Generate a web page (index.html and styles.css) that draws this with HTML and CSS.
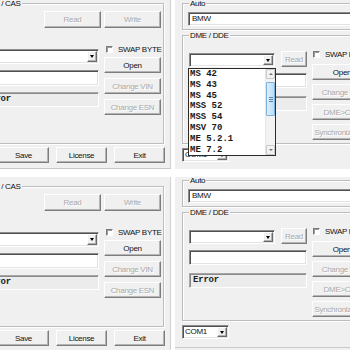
FILE: index.html
```html
<!DOCTYPE html>
<html lang="en">
<head>
<meta charset="utf-8">
<title>ECU tool</title>
<link rel="stylesheet" href="styles.css">
</head>
<body>
<main class="collage">
  <section class="win win-left">
    <div class="form cas cas-cropped">
      <div class="group cas-group">
        <div class="group-title">EWS / CAS</div>
        <div class="rw-row">
          <button class="btn btn-rw" disabled>Read</button>
          <button class="btn btn-rw" disabled>Write</button>
        </div>
        <div class="cas-body">
          <div class="cas-left">
            <div class="combo combo-cas"><span class="combo-text"></span><span class="drop-btn"><span class="tri"></span></span></div>
            <div class="field cas-field"></div>
            <div class="field readonly cas-error">Error</div>
          </div>
          <div class="cas-right">
            <div class="check"><span class="box"></span><span>SWAP BYTE</span></div>
            <button class="btn btn-open">Open</button>
            <button class="btn btn-side" disabled>Change VIN</button>
            <button class="btn btn-side" disabled>Change ESN</button>
          </div>
        </div>
      </div>
      <div class="cas-footer">
        <button class="btn btn-foot">Save</button>
        <button class="btn btn-foot">License</button>
        <button class="btn btn-foot">Exit</button>
      </div>
    </div>
  </section>

  <section class="win win-right">
    <div class="form dme">
      <div class="group auto-group">
        <div class="group-title">Auto</div>
        <div class="field text-field">BMW</div>
      </div>
      <div class="group dme-group">
        <div class="group-title">DME / DDE</div>
        <div class="dme-body">
          <div class="dme-left">
            <div class="dme-top">
              <div class="combo combo-dme"><span class="combo-text"></span><span class="drop-btn"><span class="tri"></span></span></div>
              <button class="btn btn-read" disabled>Read</button>
            </div>
            <div class="field dme-field"></div>
            <div class="field readonly dme-error">Error</div>
          </div>
          <div class="dme-right">
            <div class="check"><span class="box"></span><span>SWAP BYTE</span></div>
            <button class="btn btn-wide btn-open2">Open</button>
            <button class="btn btn-wide" disabled>Change VIN</button>
            <button class="btn btn-wide" disabled>DME&gt;CAS</button>
            <button class="btn btn-wide" disabled>Synchronize ISN</button>
          </div>
        </div>
      </div>
      <div class="combo combo-com"><span class="combo-text">COM1</span><span class="drop-btn"><span class="tri"></span></span></div>
    </div>
    <div class="list">
      <ul class="list-items">
        <li>MS 42</li>
        <li>MS 43</li>
        <li>MS 45</li>
        <li>MSS 52</li>
        <li>MSS 54</li>
        <li>MSV 70</li>
        <li>ME 5.2.1</li>
        <li>ME 7.2</li>
      </ul>
      <div class="scrollbar">
        <span class="sb-btn"><span class="sb-up"></span></span>
        <span class="sb-thumb"><span class="grip"></span></span>
        <span class="sb-btn sb-btn-down"><span class="sb-down"></span></span>
      </div>
    </div>
  </section>

  <section class="win win-left">
    <div class="form cas">
      <div class="group cas-group">
        <div class="group-title">EWS / CAS</div>
        <div class="rw-row">
          <button class="btn btn-rw" disabled>Read</button>
          <button class="btn btn-rw" disabled>Write</button>
        </div>
        <div class="cas-body">
          <div class="cas-left">
            <div class="combo combo-cas"><span class="combo-text"></span><span class="drop-btn"><span class="tri"></span></span></div>
            <div class="field cas-field"></div>
            <div class="field readonly cas-error">Error</div>
          </div>
          <div class="cas-right">
            <div class="check"><span class="box"></span><span>SWAP BYTE</span></div>
            <button class="btn btn-open">Open</button>
            <button class="btn btn-side" disabled>Change VIN</button>
            <button class="btn btn-side" disabled>Change ESN</button>
          </div>
        </div>
      </div>
      <div class="cas-footer">
        <button class="btn btn-foot">Save</button>
        <button class="btn btn-foot">License</button>
        <button class="btn btn-foot">Exit</button>
      </div>
    </div>
  </section>

  <section class="win win-right">
    <div class="form dme">
      <div class="group auto-group">
        <div class="group-title">Auto</div>
        <div class="field text-field">BMW</div>
      </div>
      <div class="group dme-group">
        <div class="group-title">DME / DDE</div>
        <div class="dme-body">
          <div class="dme-left">
            <div class="dme-top">
              <div class="combo combo-dme"><span class="combo-text"></span><span class="drop-btn"><span class="tri"></span></span></div>
              <button class="btn btn-read" disabled>Read</button>
            </div>
            <div class="field dme-field"></div>
            <div class="field readonly dme-error">Error</div>
          </div>
          <div class="dme-right">
            <div class="check"><span class="box"></span><span>SWAP BYTE</span></div>
            <button class="btn btn-wide btn-open2">Open</button>
            <button class="btn btn-wide" disabled>Change VIN</button>
            <button class="btn btn-wide" disabled>DME&gt;CAS</button>
            <button class="btn btn-wide" disabled>Synchronize ISN</button>
          </div>
        </div>
      </div>
      <div class="combo combo-com"><span class="combo-text">COM1</span><span class="drop-btn"><span class="tri"></span></span></div>
    </div>
  </section>
</main>
</body>
</html>
```

FILE: styles.css
```css
* { box-sizing: border-box; }
html, body { margin: 0; padding: 0; background: #fff; }
body {
  font-family: "Liberation Sans", Arial, sans-serif;
  font-size: 8px;
  letter-spacing: -0.3px;
  color: #111;
}

.collage {
  display: grid;
  grid-template-columns: 171px 175px;
  grid-template-rows: 169px 173px;
  column-gap: 4px;
  row-gap: 8px;
  width: 350px;
  height: 350px;
}

.win {
  position: relative;
  overflow: hidden;
  background: #f0f0f0;
  display: flex;
  align-items: flex-start;
}
.win-left { justify-content: flex-end; }
.win-right { justify-content: flex-start; }

.form { flex: none; display: flex; flex-direction: column; }

/* group boxes */
.group {
  display: flex;
  flex-direction: column;
  border: 1px solid #bdbdbd;
  box-shadow: inset 1px 1px 0 #fff, 1px 1px 0 #fff;
}
.group-title {
  align-self: flex-start;
  height: 9px;
  line-height: 9px;
  margin-top: -5px;
  padding: 0 1px;
  background: #f0f0f0;
  white-space: nowrap;
}

/* buttons */
.btn {
  appearance: none;
  -webkit-appearance: none;
  margin: 0;
  padding: 0;
  font: inherit;
  letter-spacing: inherit;
  color: #111;
  background: #f0f0f0;
  border: 1px solid;
  border-color: #fff #7d7d7d #7d7d7d #fff;
  box-shadow: inset -1px -1px 0 #b4b4b4;
  text-align: center;
  white-space: nowrap;
  overflow: hidden;
  flex: none;
}
.btn:disabled {
  color: #a9a9a9;
  text-shadow: 1px 1px 0 #fff;
}

/* inputs */
.field {
  background: #fff;
  border: 1px solid;
  border-color: #8c8c8c #fff #fff #8c8c8c;
  box-shadow: inset 1px 1px 0 #505050, inset -1px -1px 0 #e3e3e3;
  white-space: nowrap;
  overflow: hidden;
}
.field.readonly {
  background: #ececec;
  border-color: #a6a6a6 #fff #fff #a6a6a6;
  box-shadow: inset 1px 1px 0 #8a8a8a;
  font: bold 9px/13px "Liberation Mono", "Courier New", monospace;
  letter-spacing: -0.2px;
  padding-left: 3px;
  color: #222;
}

.combo {
  display: flex;
  align-items: stretch;
  background: #fff;
  border: 1px solid;
  border-color: #8c8c8c #fff #fff #8c8c8c;
  box-shadow: inset 1px 1px 0 #505050, inset -1px -1px 0 #e3e3e3;
  padding: 1px;
  flex: none;
}
.combo-text {
  flex: 1;
  padding-left: 1px;
  line-height: 10px;
  overflow: hidden;
  white-space: nowrap;
}
.drop-btn {
  width: 10px;
  flex: none;
  background: #f0f0f0;
  border: 1px solid;
  border-color: #fff #6a6a6a #6a6a6a #fff;
  box-shadow: inset -1px -1px 0 #b0b0b0;
  display: flex;
  align-items: center;
  justify-content: center;
}
.tri {
  width: 0;
  height: 0;
  border-left: 2.5px solid transparent;
  border-right: 2.5px solid transparent;
  border-top: 3px solid #000;
}

.check {
  display: flex;
  align-items: center;
  gap: 5px;
  height: 9px;
  white-space: nowrap;
}
.box {
  width: 7px;
  height: 7px;
  flex: none;
  background: #fff;
  border: 1px solid;
  border-color: #7a7a7a #fff #fff #7a7a7a;
  box-shadow: inset 1px 1px 0 #9a9a9a;
}

/* ---------- EWS / CAS window ---------- */
.cas {
  width: 203px;
  padding: 9px 6px 5px 6px;
  border-right: 1px solid #d2d2d2;
  border-bottom: 1px solid #c8c8c8;
}
.cas-cropped { margin-top: -6px; }
.cas-group { padding: 0 2px 28px 6px; }
.rw-row {
  display: flex;
  justify-content: flex-end;
  gap: 3px;
  margin-top: 3px;
}
.btn-rw { width: 57px; height: 17px; }
.cas-body {
  display: flex;
  gap: 5px;
  margin-top: 17px;
}
.cas-left {
  width: 118px;
  display: flex;
  flex-direction: column;
  gap: 6px;
  padding-top: 4px;
}
.combo-cas { height: 15px; }
.cas-field { height: 16px; }
.cas-error { height: 15px; }
.cas-right {
  width: 57px;
  display: flex;
  flex-direction: column;
}
.cas-right .check { margin-left: 2px; }
.btn-open { height: 16px; margin-top: 3px; }
.btn-side { height: 16px; margin-top: 5px; }
.cas-footer {
  display: flex;
  justify-content: flex-end;
  gap: 7px;
  margin-top: 3px;
  margin-right: -1px;
}
.btn-foot { width: 51px; height: 16px; }

/* ---------- Auto / DME window ---------- */
.dme {
  width: 240px;
  padding: 3px 0 8px 7px;
  border-bottom: 1px solid #c8c8c8;
}
.auto-group { padding: 0 0 3px 5px; }
.auto-group .group-title { margin-left: 1px; }
.text-field {
  margin-top: 4px;
  height: 14px;
  line-height: 12px;
  padding-left: 3px;
}
.dme-group {
  margin-top: 5px;
  padding: 0 0 3px 6px;
}
.dme-body {
  display: flex;
  gap: 5px;
  margin-top: 10px;
}
.dme-left {
  width: 118px;
  display: flex;
  flex-direction: column;
  padding-top: 1px;
}
.dme-top {
  display: flex;
  align-items: flex-end;
  gap: 6px;
}
.combo-dme { width: 86px; height: 14px; }
.btn-read { width: 26px; height: 16px; }
.dme-field { height: 15px; margin-top: 6px; }
.dme-error { height: 15px; margin-top: 8px; }
.dme-right {
  width: 60px;
  display: flex;
  flex-direction: column;
}
.dme-right .check { margin-left: 1px; }
.btn-wide { height: 16px; margin-top: 4px; }
.btn-open2 { margin-top: 5px; }
.combo-com {
  width: 47px;
  height: 14px;
  margin-top: 4px;
}

/* open drop-down list */
.list {
  position: absolute;
  left: 13px;
  top: 68px;
  width: 88px;
  height: 88px;
  background: #fff;
  border: 1px solid #2b2b2b;
  display: flex;
  overflow: hidden;
}
.list-items {
  flex: 1;
  list-style: none;
  margin: 0;
  padding: 0 0 0 1px;
  font: bold 9px/10.8px "Liberation Mono", "Courier New", monospace;
  letter-spacing: 0;
  color: #1a1a1a;
  white-space: nowrap;
}
.scrollbar {
  width: 10px;
  flex: none;
  display: flex;
  flex-direction: column;
  background: #f3f3f3;
  border-left: 1px solid #e6e6e6;
}
.sb-btn {
  height: 10px;
  flex: none;
  background: #f2f2f2;
  border: 1px solid #c9c9c9;
  border-radius: 1px;
  display: flex;
  align-items: center;
  justify-content: center;
}
.sb-btn-down { margin-top: auto; }
.sb-up {
  width: 0; height: 0;
  border-left: 2px solid transparent;
  border-right: 2px solid transparent;
  border-bottom: 2px solid #707070;
}
.sb-down {
  width: 0; height: 0;
  border-left: 2px solid transparent;
  border-right: 2px solid transparent;
  border-top: 2px solid #707070;
}
.sb-thumb {
  margin-top: 3px;
  height: 34px;
  flex: none;
  background: linear-gradient(90deg, #dcefff, #b9dcf6);
  border: 1px solid #7fb2da;
  border-radius: 1px;
  display: flex;
  align-items: center;
  justify-content: center;
}
.grip {
  width: 4px;
  height: 5px;
  background: repeating-linear-gradient(180deg, #5b86a8 0 1px, transparent 1px 2px);
}
```
